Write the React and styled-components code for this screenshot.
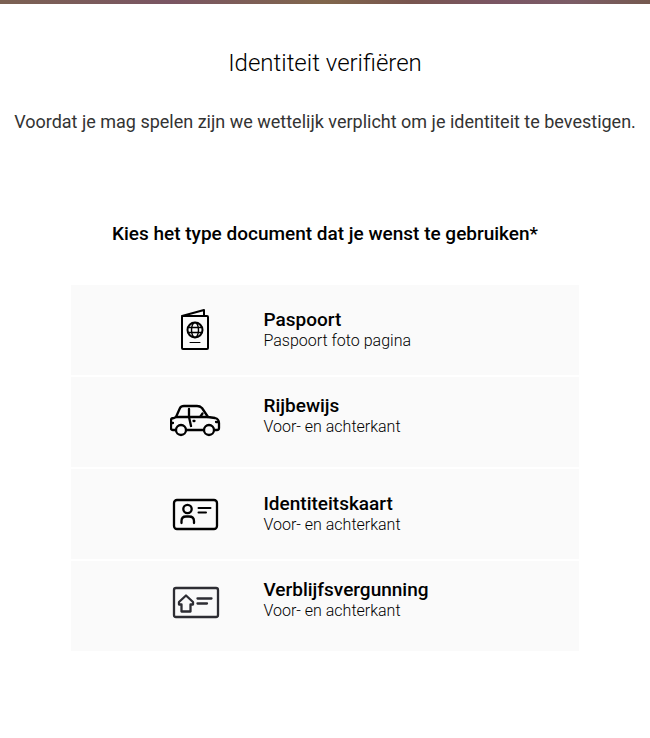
import React from "react";
import styled, { createGlobalStyle } from "styled-components";

const theme = {
  black: "#000",
  grey: "#333",
  card: "#fafafa",
  permit: "#2d2d33",
};

function PassportIcon() {
  return (
    <Icon viewBox="0 0 60 60">
      <rect x="12" y="16" width="26" height="33" rx="1" strokeWidth="2" />
      <path d="M12 16L34 10V16" strokeWidth="2" />
      <circle cx="25" cy="30" r="7.5" strokeWidth="2" />
      <ellipse cx="25" cy="30" rx="3.5" ry="7.5" strokeWidth="1.4" />
      <path d="M18 27.5H32M18 32.5H32" strokeWidth="1.4" />
      <path d="M20 42.5H30" strokeWidth="1" />
    </Icon>
  );
}

function CarIcon() {
  return (
    <Icon viewBox="0 3 60 60">
      <path d="M6 41H3Q1 41 1 39V31Q1 29 4 29L6 28L10 19Q11 17 14 17H27Q30 17 32 19L38 28L45 29Q49 30 49 34V39Q49 41 47 41H45" />
      <path d="M16 41H34M6 28H38M19 20V28L21 37M1 34H3M46 33H48" />
      <path d="M30.5 27.5L32.5 24.5M23.5 32H24.5" />
      <circle cx="11" cy="41" r="5" />
      <circle cx="39" cy="41" r="5" />
    </Icon>
  );
}

function IdCardIcon() {
  return (
    <Icon viewBox="0 0 60 60">
      <rect x="4" y="16" width="43" height="29" rx="3" />
      <circle cx="17.5" cy="25" r="4.2" />
      <path d="M11.5 39V37Q11.5 32.5 16 32.5H19Q24 32.5 24 37V39" />
      <path d="M28.5 24H40.5M28.5 28.5H36" strokeWidth="2" />
    </Icon>
  );
}

function PermitIcon() {
  return (
    <Icon viewBox="0 0 60 60" $color={theme.permit}>
      <rect x="4" y="12" width="44" height="29" rx="2" />
      <path d="M16 19.5L9 26V28.5H11.5V35.5H20.5V28.5H23V26Z" />
      <path d="M27.5 22.5H41.5M27.5 27.5H37" />
    </Icon>
  );
}

const documents = [
  { title: "Paspoort", text: "Paspoort foto pagina", icon: <PassportIcon /> },
  {
    title: "Rijbewijs",
    text: "Voor- en achterkant",
    icon: <CarIcon />,
    raised: true,
  },
  {
    title: "Identiteitskaart",
    text: "Voor- en achterkant",
    icon: <IdCardIcon />,
  },
  {
    title: "Verblijfsvergunning",
    text: "Voor- en achterkant",
    icon: <PermitIcon />,
    raised: true,
  },
];

function App() {
  return (
    <>
      <GlobalStyle />
      <TopBorder />
      <Main>
        <Title>Identiteit verifiëren</Title>
        <Intro>
          Voordat je mag spelen zijn we wettelijk verplicht om je identiteit te
          bevestigen.
        </Intro>
        <Question id="question">
          Kies het type document dat je wenst te gebruiken*
        </Question>
        <DocumentList role="group" aria-labelledby="question">
          {documents.map((el) => (
            <DocumentBtn key={el.title} type="button">
              <IconBox>{el.icon}</IconBox>
              <DocumentText $raised={el.raised}>
                <DocumentName>{el.title}</DocumentName>
                <DocumentInfo>{el.text}</DocumentInfo>
              </DocumentText>
            </DocumentBtn>
          ))}
        </DocumentList>
      </Main>
    </>
  );
}

const GlobalStyle = createGlobalStyle`
  * {
    box-sizing: border-box;
  }

  body {
    margin: 0;
    background-color: white;
    font-family: Roboto, sans-serif;
  }
`;

const TopBorder = styled.div`
  height: 4px;
  background: linear-gradient(
    90deg,
    #7b6152,
    #7a5563 26%,
    #80664b 50%,
    #78554f 63%,
    #7a5563 76%,
    #7b5c66 88%,
    #75594f
  );
`;

const Main = styled.main`
  display: flex;
  flex-direction: column;
  align-items: center;
  padding: 44px 12px;
`;

const Title = styled.h1`
  margin: 0;
  color: ${theme.black};
  font-size: 24px;
  font-weight: 300;
  line-height: 30px;
`;

const Intro = styled.p`
  margin: 32px 0 0;
  color: ${theme.grey};
  font-size: 18px;
  line-height: 24px;
  text-align: center;
`;

const Question = styled.h2`
  margin: 88px 0 0;
  color: ${theme.black};
  font-size: 19px;
  font-weight: 500;
  line-height: 24px;
  text-align: center;
`;

const DocumentList = styled.div`
  display: flex;
  flex-direction: column;
  gap: 2px;
  width: 81%;
  margin-top: 39px;
`;

const DocumentBtn = styled.button`
  display: grid;
  grid-template-columns: 192px 1fr;
  align-items: center;
  min-height: 90px;
  padding: 0;
  border: 0;
  background-color: ${theme.card};
  font-family: inherit;
  text-align: left;
  cursor: pointer;

  &:hover {
    background-color: #f2f2f2;
  }
`;

const IconBox = styled.span`
  display: flex;
  justify-content: flex-end;
  padding-right: 33px;
`;

const Icon = styled.svg`
  width: 60px;
  height: 60px;
  fill: none;
  stroke: ${(props) => props.$color || theme.black};
  stroke-width: 2.3;
  stroke-linecap: round;
  stroke-linejoin: round;
`;

const DocumentText = styled.span`
  display: flex;
  flex-direction: column;
  padding-bottom: ${(props) => (props.$raised ? "12px" : "0")};
`;

const DocumentName = styled.span`
  color: ${theme.black};
  font-size: 19px;
  font-weight: 500;
  line-height: 22px;
`;

const DocumentInfo = styled.span`
  color: ${theme.black};
  font-size: 16px;
  font-weight: 300;
  line-height: 20px;
`;

export default App;
